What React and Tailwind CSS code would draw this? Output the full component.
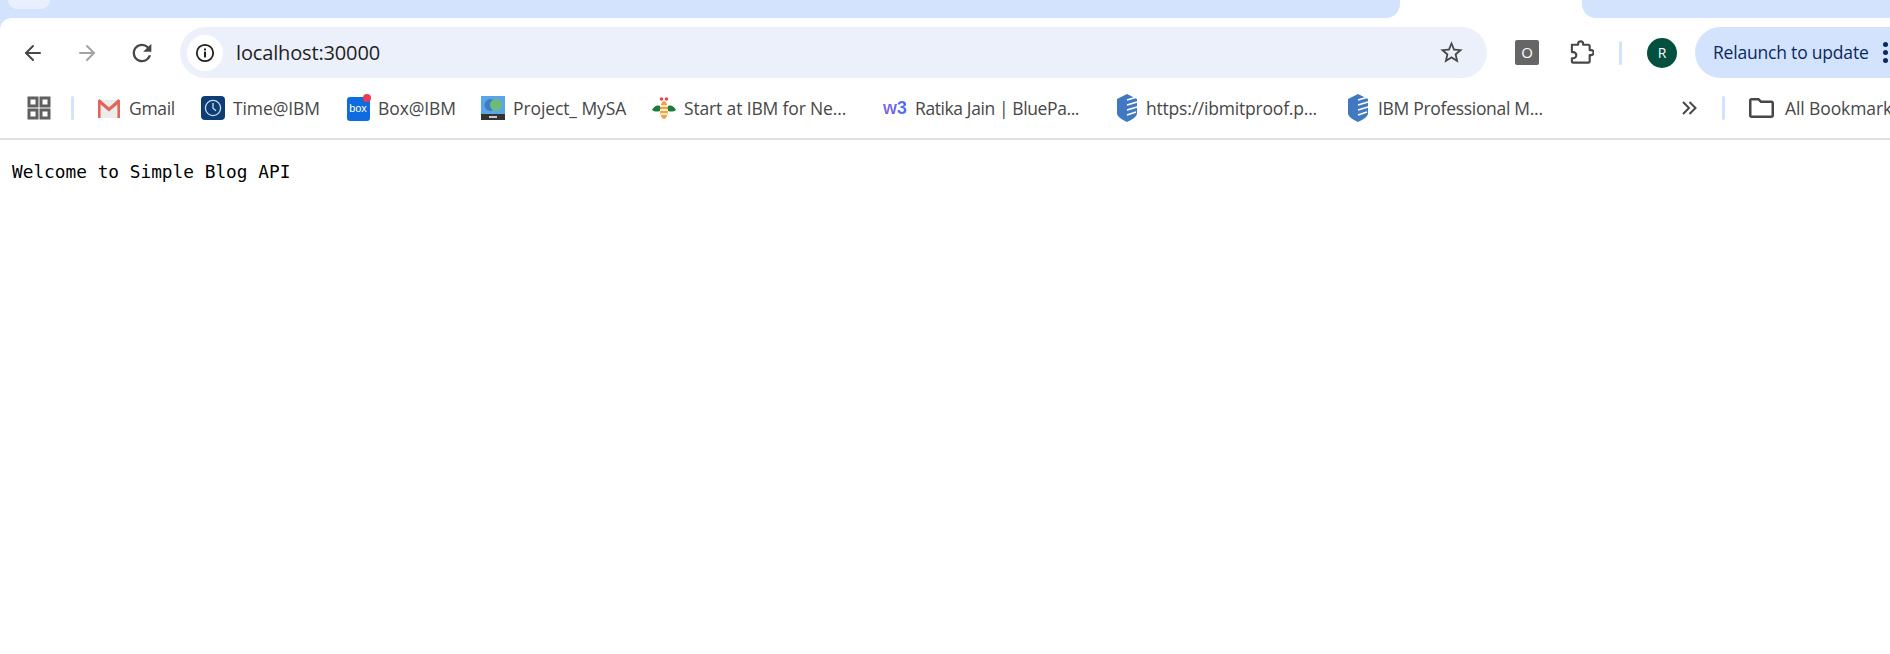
// Chrome window: tab strip, toolbar, bookmarks bar and the plain text page below.
import { ArrowLeft, ArrowRight } from 'lucide-react'

const FUENTE = "font-['Open_Sans',sans-serif]"

function StarIcon() {
  return (
    <svg viewBox="0 0 24 24" className="w-[27px] h-[27px] fill-[#474747]">
      <path d="M22 9.24l-7.19-.62L12 2 9.19 8.63 2 9.24l5.46 4.73L5.82 21 12 17.27 18.18 21l-1.63-7.03L22 9.24zM12 15.4l-3.76 2.27 1-4.28-3.32-2.88 4.38-.38L12 6.1l1.71 4.04 4.38.38-3.32 2.88 1 4.28L12 15.4z" />
    </svg>
  )
}

function ReloadIcon() {
  return (
    <svg viewBox="0 0 24 24" className="w-[28px] h-[28px] fill-[#474747]">
      <path d="M17.65 6.35A7.958 7.958 0 0 0 12 4c-4.42 0-7.99 3.58-7.99 8s3.57 8 7.99 8c3.73 0 6.84-2.55 7.73-6h-2.08A5.99 5.99 0 0 1 12 18c-3.31 0-6-2.69-6-6s2.69-6 6-6c1.66 0 3.14.69 4.22 1.78L13 11h7V4l-2.35 2.35z" />
    </svg>
  )
}

function InfoIcon() {
  return (
    <svg viewBox="0 0 20 20" className="w-[20px] h-[20px]">
      <circle cx="10" cy="10" r="8.2" fill="none" stroke="#1f1f1f" strokeWidth="1.8" />
      <rect x="9" y="8.6" width="2" height="5.8" fill="#1f1f1f" />
      <rect x="9" y="5.5" width="2" height="1.9" fill="#1f1f1f" />
    </svg>
  )
}

function PuzzleIcon() {
  return (
    <svg viewBox="0 0 26 26" className="w-[25px] h-[25px]">
      <path
        d="M3 5h6.5V4a2.6 2.6 0 0 1 5.2 0v1H20a1.5 1.5 0 0 1 1.5 1.5V10.5H23a2.6 2.6 0 0 1 0 5.2h-1.5V22a1.5 1.5 0 0 1-1.5 1.5H4.5A1.5 1.5 0 0 1 3 22v-3h1.4a3.2 3.2 0 0 0 0-6.4H3V6.5z"
        fill="none"
        stroke="#474747"
        strokeWidth="2.2"
        strokeLinejoin="round"
      />
    </svg>
  )
}

function AppsIcon() {
  return (
    <svg viewBox="0 0 24 24" className="w-[24px] h-[24px]" fill="none" stroke="#5f5f5f" strokeWidth="3">
      <rect x="2" y="2" width="8" height="8" />
      <rect x="14" y="2" width="8" height="8" />
      <rect x="2" y="14" width="8" height="8" />
      <rect x="14" y="14" width="8" height="8" />
    </svg>
  )
}

function GmailIcon() {
  return (
    <svg viewBox="0 0 24 20" className="w-[24px] h-[20px]">
      <path d="M2 2h20v18H2z" fill="#ececec" />
      <path d="M1 20V2.5L2.5 1 12 9.5 21.5 1 23 2.5V20h-2.6V6.5L12 13.5 3.6 6.5V20z" fill="#e0665a" />
    </svg>
  )
}

function TimeIcon() {
  return (
    <svg viewBox="0 0 24 24" className="w-[24px] h-[24px]">
      <rect width="24" height="24" rx="4" fill="#0f3d73" />
      <circle cx="12" cy="12" r="7.6" fill="none" stroke="#c9dcf0" strokeWidth="1.3" />
      <path d="M12 7v5.3l3 2.5" fill="none" stroke="#c9dcf0" strokeWidth="1.3" />
    </svg>
  )
}

function BoxIcon() {
  return (
    <span className="relative flex items-center justify-center w-[23px] h-[24px] rounded-[3px] bg-[#0f6ce0] mt-[1px]">
      <span className="font-['Liberation_Sans',sans-serif] text-[11px] leading-none text-white">box</span>
      <span className="absolute -top-[3px] -right-[1px] w-[8px] h-[8px] rounded-full bg-[#ee3b54]" />
    </span>
  )
}

function ProjectIcon() {
  return (
    <svg viewBox="0 0 24 24" className="w-[24px] h-[24px]">
      <rect width="24" height="18" fill="#5aa5e6" />
      <circle cx="9.5" cy="9" r="6" fill="#3f7cc4" />
      <circle cx="15" cy="9" r="6" fill="#6dbb7a" />
      <rect y="18" width="24" height="6" fill="#333333" />
      <rect x="8" y="20" width="8" height="2" fill="#cccccc" />
    </svg>
  )
}

function BeeIcon() {
  return (
    <svg viewBox="0 0 24 24" className="w-[24px] h-[24px]">
      <circle cx="9.5" cy="3" r="1.8" fill="#e8455d" />
      <circle cx="14.5" cy="3" r="1.8" fill="#e8455d" />
      <path d="M9 11C6 8 2 10 0 14c3 2 7 2 9 0z" fill="#1f7a3f" />
      <path d="M15 11c3-3 7-1 9 3-3 2-7 2-9 0z" fill="#1f7a3f" />
      <ellipse cx="12" cy="14" rx="4" ry="9" fill="#f2a33c" />
      <path d="M8 10h8M8 14h8M9 18h6" stroke="#ffffff" strokeWidth="1.3" />
    </svg>
  )
}

function W3Icon() {
  return (
    <span className="w-[24px] font-['Liberation_Sans',sans-serif] text-[18px] font-bold leading-none bg-gradient-to-r from-[#8a63f0] to-[#3d6df5] bg-clip-text text-transparent">
      w3
    </span>
  )
}

function ShieldIcon() {
  return (
    <svg viewBox="0 0 22 28" className="w-[22px] h-[28px]">
      <path d="M11 0l10 5v15q-1 4-10 8Q2 24 1 20V5z" fill="#4079c2" />
      <path d="M11 6l10-3M11 11l10-3M11 16l10-3M11 21l9-3" stroke="#ffffff" strokeWidth="1.6" />
    </svg>
  )
}

function FolderIcon() {
  return (
    <svg viewBox="2 4 20 16" className="w-[25px] h-[20px] fill-[#474747]">
      <path d="M20 6h-8l-2-2H4c-1.1 0-2 .9-2 2v12c0 1.1.9 2 2 2h16c1.1 0 2-.9 2-2V8c0-1.1-.9-2-2-2zm0 12H4V6h5.17l2 2H20v10z" />
    </svg>
  )
}

function MasIcon() {
  return (
    <svg viewBox="0 0 16 14" className="w-[16px] h-[14px]" fill="none" stroke="#474747" strokeWidth="2">
      <path d="M2 1l6 6-6 6M8.5 1l6 6-6 6" />
    </svg>
  )
}

function Separador({ className = '' }) {
  return <span className={`w-[3px] h-[24px] rounded-full bg-[#d3e3fd] shrink-0 ${className}`} />
}

function Marcador({ icono, texto, ancho, gap, tracking = 'tracking-[-0.1px]' }) {
  return (
    <div className={`flex items-center shrink-0 ${ancho} ${gap}`}>
      <span className="flex items-center justify-center w-[24px] h-[28px] shrink-0">{icono}</span>
      <span className={`text-[17.5px] text-[#474747] whitespace-nowrap ${tracking}`}>{texto}</span>
    </div>
  )
}

export default function App() {
  return (
    <div className={`min-h-[654px] bg-white ${FUENTE}`}>
      <div className="bg-[#d3e3fd]">
        <div className="flex h-[18px] bg-white">
          <div className="w-[1400px] pl-[8px] bg-[#d3e3fd] rounded-br-[14px]">
            <div className="w-[42px] h-[9px] bg-[#e8f0fe] rounded-b-[10px]" />
          </div>
          <div className="w-[182px]" />
          <div className="flex-1 bg-[#d3e3fd] rounded-bl-[14px]" />
        </div>

        <div className="bg-white rounded-tl-[12px]">
          <div className="flex items-center h-[60px] pl-[21px] pt-[9px]">
            <ArrowLeft className="w-[24px] h-[24px] text-[#474747]" strokeWidth={2} />
            <ArrowRight className="w-[24px] h-[24px] ml-[30px] text-[#a3a3a3]" strokeWidth={2} />
            <span className="ml-[29px] flex"><ReloadIcon /></span>

            <div className="flex items-center ml-[24px] w-[1307px] h-[51px] rounded-full bg-[#ecf0fa]">
              <span className="flex items-center justify-center ml-[7px] w-[36px] h-[36px] rounded-full bg-white">
                <InfoIcon />
              </span>
              <span className="ml-[13px] text-[20px] text-[#1f1f1f] tracking-[-0.15px]">localhost:30000</span>
              <span className="ml-auto mr-[22px] flex"><StarIcon /></span>
            </div>

            <span className="flex items-center justify-center ml-[28px] w-[24px] h-[25px] rounded-[2px] bg-[#666666] text-white text-[15px]">O</span>
            <span className="ml-[30px] flex"><PuzzleIcon /></span>
            <Separador className="ml-[25px]" />
            <span className="flex items-center justify-center ml-[25px] w-[30px] h-[30px] rounded-full bg-[#04503f] text-white text-[14px]">R</span>
            <div className="flex items-center ml-[18px] h-[51px] flex-1 min-w-0 rounded-l-full bg-[#d3e3fd] pl-[18px] overflow-hidden">
              <span className="text-[17.5px] text-[#0b2a5c] whitespace-nowrap tracking-[-0.2px]">Relaunch to update</span>
              <span className="ml-[14px] flex flex-col gap-[3px]">
                <span className="w-[5px] h-[5px] rounded-full bg-[#0b2a5c]" />
                <span className="w-[5px] h-[5px] rounded-full bg-[#0b2a5c]" />
                <span className="w-[5px] h-[5px] rounded-full bg-[#0b2a5c]" />
              </span>
            </div>
          </div>

          <div className="flex items-center h-[60px] pl-[27px] overflow-hidden">
            <span className="flex w-[24px] shrink-0"><AppsIcon /></span>
            <Separador className="ml-[20px]" />
            <div className="flex items-center ml-[23px]">
              <Marcador icono={<GmailIcon />} texto="Gmail" ancho="w-[104px]" gap="gap-[8px]" tracking="tracking-[-0.3px]" />
              <Marcador icono={<TimeIcon />} texto="Time@IBM" ancho="w-[145px]" gap="gap-[8px]" />
              <Marcador icono={<BoxIcon />} texto="Box@IBM" ancho="w-[135px]" gap="gap-[8px]" />
              <Marcador icono={<ProjectIcon />} texto="Project_ MySA" ancho="w-[171px]" gap="gap-[8px]" />
              <Marcador icono={<BeeIcon />} texto="Start at IBM for Ne..." ancho="w-[231px]" gap="gap-[8px]" tracking="tracking-[-0.15px]" />
              <Marcador icono={<W3Icon />} texto="Ratika Jain | BluePa..." ancho="w-[232px]" gap="gap-[8px]" tracking="tracking-[-0.4px]" />
              <Marcador icono={<ShieldIcon />} texto="https://ibmitproof.p..." ancho="w-[231px]" gap="gap-[7px]" tracking="tracking-[-0.2px]" />
              <Marcador icono={<ShieldIcon />} texto="IBM Professional M..." ancho="w-[335px]" gap="gap-[8px]" tracking="tracking-[-0.3px]" />
            </div>
            <span className="flex w-[41px] shrink-0"><MasIcon /></span>
            <Separador />
            <span className="ml-[24px] flex shrink-0"><FolderIcon /></span>
            <span className="ml-[11px] text-[17.5px] text-[#474747] whitespace-nowrap tracking-[-0.1px]">All Bookmarks</span>
          </div>
          <div className="h-[2px] bg-[#e0e0e0]" />
        </div>
      </div>

      <pre className="pl-[12px] pt-[21px] font-['DejaVu_Sans_Mono',monospace] text-[17.8px] leading-[22px] text-black">Welcome to Simple Blog API</pre>
    </div>
  )
}
